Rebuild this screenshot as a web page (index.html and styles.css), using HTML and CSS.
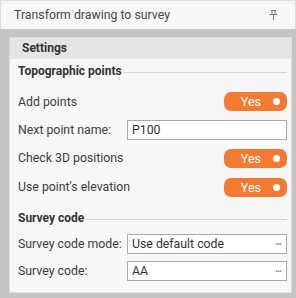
FILE: index.html
```html
<!DOCTYPE html>
<html>
<head>
<meta charset="utf-8">
<link rel="stylesheet" href="styles.css">
</head>
<body>
<div class="window">
  <div class="titlebar">
    <span class="title">Transform drawing to survey</span>
    <svg class="pin" width="9" height="10" viewBox="0 0 9 10">
      <path d="M2 0.5H7M3 0.5V4.5M6 0.5V4.5M0.5 4.5H8.5M4.5 4.5V10" stroke="#7a7a7a" stroke-width="1" fill="none"/>
    </svg>
  </div>
  <div class="main">
    <div class="panel">
      <div class="panel-header">Settings</div>
      <div class="content">
        <div class="section first"><span>Topographic points</span><i class="rule"></i></div>
        <div class="row r29 gap"><span class="label">Add points</span><span class="toggle"><span class="yes">Yes</span><span class="dot"></span></span></div>
        <div class="row r28"><span class="label">Next point name:</span><span class="input">P100</span></div>
        <div class="row r28"><span class="label">Check 3D positions</span><span class="toggle"><span class="yes">Yes</span><span class="dot"></span></span></div>
        <div class="row r30"><span class="label">Use point's elevation</span><span class="toggle"><span class="yes">Yes</span><span class="dot"></span></span></div>
        <div class="section second"><span>Survey code</span><i class="rule"></i></div>
        <div class="row r28"><span class="label">Survey code mode:</span><span class="input"><span>Use default code</span><span class="more">···</span></span></div>
        <div class="row r26"><span class="label">Survey code:</span><span class="input"><span>AA</span><span class="more">···</span></span></div>
      </div>
    </div>
  </div>
</div>
</body>
</html>
```

FILE: styles.css
```css
* { box-sizing: border-box; }
html, body { margin: 0; padding: 0; }
body {
  width: 296px;
  height: 298px;
  overflow: hidden;
  font-family: Roboto, "Liberation Sans", sans-serif;
  color: #3b3b44;
  background: #c4c4c4;
}
.window { width: 296px; height: 298px; display: flex; flex-direction: column; }
.titlebar {
  height: 29px;
  flex: none;
  background: #f7f7f7;
  border: 1px solid #dcdcdc;
  border-bottom: none;
  display: flex;
  align-items: center;
  justify-content: space-between;
  padding: 0 17px 1px 13px;
  font-size: 12.3px;
  color: #45454d;
}
.pin { display: block; margin-top: 1px; }
.main {
  flex: 1;
  background: #c4c4c4;
  padding: 8px 4px 5px 9px;
  display: flex;
}
.panel {
  flex: 1;
  border: 1px solid #dedede;
  background: #f7f7f7;
  display: flex;
  flex-direction: column;
}
.panel-header {
  height: 21px;
  background: #e5e5e5;
  font-weight: bold;
  font-size: 12px;
  line-height: 21px;
  padding-left: 12px;
  color: #333;
}
.content {
  padding: 0 4px 0 8px;
  display: flex;
  flex-direction: column;
}
.section {
  height: 24px;
  display: flex;
  align-items: center;
  font-weight: bold;
  font-size: 12px;
  color: #333;
}
.section .rule {
  flex: 1;
  height: 1px;
  background: #d4d4d4;
  margin-left: 2px;
  margin-top: 2px;
}
.section.second { margin-top: 4px; }
.row { display: flex; align-items: center; font-size: 12.3px; }
.row.gap { margin-top: 4px; }
.r26 { height: 26px; }
.r28 { height: 28px; }
.r29 { height: 29px; }
.r30 { height: 30px; }
.label { width: 109px; flex: none; white-space: nowrap; }
.toggle {
  margin-left: auto;
  width: 63px;
  height: 19px;
  border-radius: 7px;
  background: #f37a33;
  color: #fff;
  display: flex;
  align-items: center;
  justify-content: flex-end;
  padding-right: 7px;
  font-size: 12.5px;
}
.toggle .yes { margin-right: 12px; }
.toggle .dot { width: 7px; height: 7px; border-radius: 50%; background: #fff; }
.input {
  flex: 1;
  height: 20px;
  background: #fff;
  border: 1px solid #a9a9a9;
  display: flex;
  align-items: center;
  justify-content: space-between;
  padding: 0 5px 0 4px;
  color: #333;
}
.more { color: #888; font-size: 10px; letter-spacing: -1px; font-weight: bold; }
```
